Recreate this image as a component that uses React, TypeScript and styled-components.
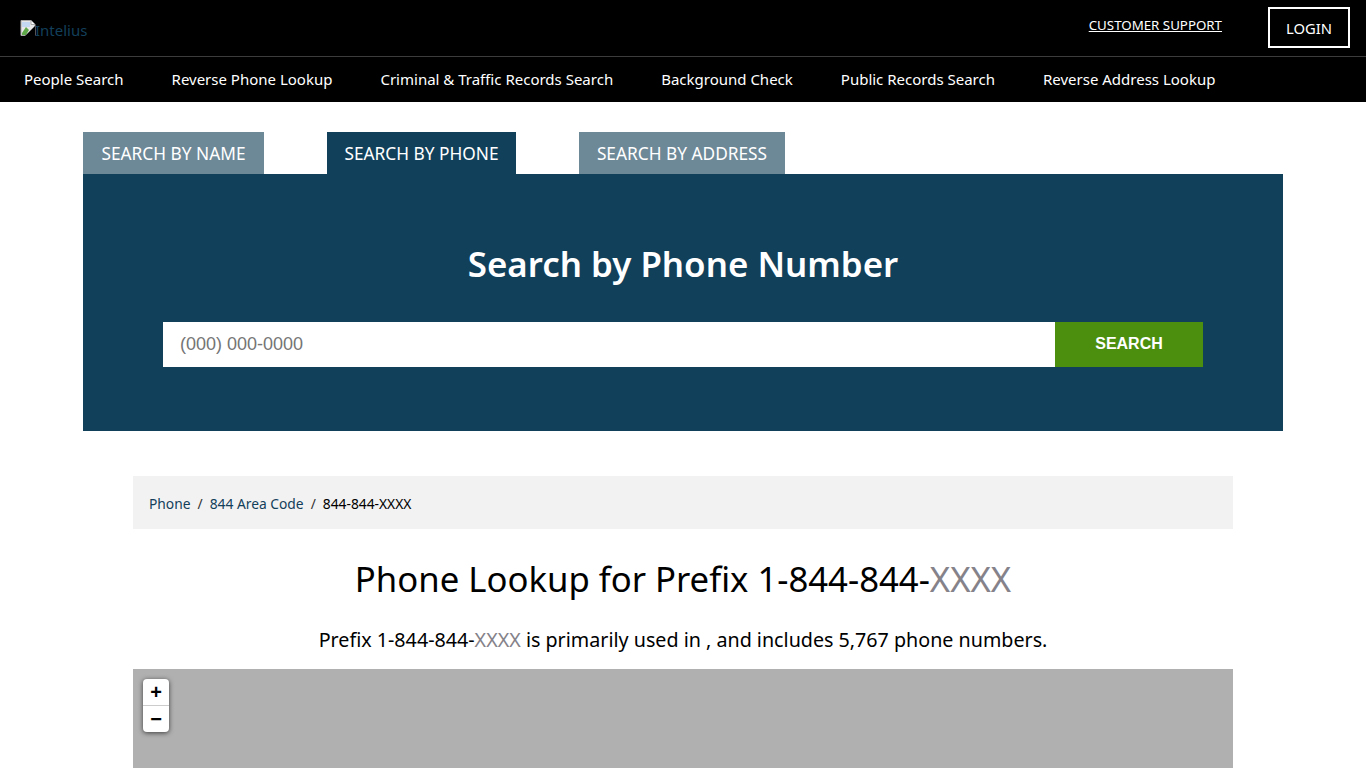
import React from "react";
import styled, { createGlobalStyle } from "styled-components";

const GlobalStyle = createGlobalStyle`
  html, body {
    margin: 0;
    padding: 0;
    background: #fff;
    color: #000;
    font-family: "Noto Sans", "Open Sans", "Liberation Sans", sans-serif;
  }

  * {
    box-sizing: border-box;
  }
`;

const TopBar = styled.div`
  height: 57px;
  background: #000;
  border-bottom: 1px solid #3c3c3c;
  display: flex;
  align-items: flex-start;
  justify-content: space-between;
  padding: 7px 16px 0 20px;
`;

const Logo = styled.a`
  display: flex;
  align-items: flex-start;
  margin-top: 13px;
  color: #123f5a;
  font-size: 15px;
  line-height: 20px;
  text-decoration: none;
  svg {
    flex: none;
    margin-right: -1px;
  }
`;

const TopActions = styled.div`
  display: flex;
  align-items: flex-start;
  gap: 46px;
`;

const SupportLink = styled.a`
  margin-top: 8px;
  color: #fff;
  font-size: 13.3px;
  line-height: 20px;
  text-decoration: underline;
`;

const LoginButton = styled.button`
  width: 82px;
  height: 41px;
  background: #000;
  border: 2px solid #fff;
  color: #fff;
  font-family: inherit;
  font-size: 14.8px;
  padding: 0;
`;

const NavBar = styled.nav`
  height: 45px;
  background: #000;
  display: flex;
  align-items: center;
  gap: 48px;
  padding: 0 24px 1px;
`;

const NavLink = styled.a`
  color: #fff;
  font-size: 15px;
  line-height: 20px;
  text-decoration: none;
  white-space: nowrap;
`;

const SearchSection = styled.section`
  width: 1200px;
  margin: 30px auto 0;
`;

const Tabs = styled.div`
  display: grid;
  grid-template-columns: 181px 189px 206px;
  gap: 63px;
`;

const Tab = styled.a<{ $active?: boolean }>`
  height: 42px;
  display: flex;
  align-items: center;
  justify-content: center;
  background: ${(p) => (p.$active ? "#11405b" : "#6d8897")};
  color: #fff;
  font-size: 17.3px;
  white-space: nowrap;
`;

const SearchPanel = styled.div`
  height: 257px;
  background: #11405b;
  padding: 65px 80px 0;
`;

const PanelTitle = styled.h2`
  margin: 0 0 34px;
  color: #fff;
  font-size: 34.9px;
  line-height: 49px;
  font-weight: 600;
  text-align: center;
`;

const SearchForm = styled.form`
  display: flex;
  height: 45px;
`;

const PhoneInput = styled.input`
  flex: 1;
  min-width: 0;
  border: 0;
  outline: 0;
  padding: 0 17px;
  background: #fff;
  font-family: "Liberation Sans", Arial, sans-serif;
  font-size: 18px;
  &::placeholder {
    color: #757575;
    opacity: 1;
  }
`;

const SearchButton = styled.button`
  width: 148px;
  border: 0;
  padding: 0 0 2px;
  background: #4c8f0e;
  color: #fff;
  font-family: "Liberation Sans", Arial, sans-serif;
  font-size: 16px;
  font-weight: 700;
`;

const Content = styled.main`
  width: 1100px;
  margin: 45px auto 0;
`;

const Breadcrumb = styled.ol`
  list-style: none;
  margin: 0;
  height: 53px;
  padding: 2px 16px 0;
  display: flex;
  align-items: center;
  background: #f2f2f2;
  font-size: 13.8px;
`;

const Crumb = styled.li`
  color: #000;
  & + &::before {
    content: "/";
    padding: 0 7px;
    color: #333;
  }
  a {
    color: #12405b;
    text-decoration: none;
  }
`;

const Heading = styled.h1`
  margin: 25px 0 0;
  font-size: 34.7px;
  line-height: 50px;
  font-weight: 400;
  text-align: center;
`;

const Masked = styled.span`
  color: #85828a;
`;

const Intro = styled.p`
  margin: 21px 0 0;
  font-size: 19.7px;
  line-height: 30px;
  text-align: center;
`;

const MapBox = styled.div`
  position: relative;
  height: 99px;
  margin-top: 14px;
  background: #b0b0b0;
`;

const ZoomControl = styled.div`
  position: absolute;
  top: 10px;
  left: 10px;
  width: 26px;
  border-radius: 4px;
  background: #fff;
  box-shadow: 0 1px 5px rgba(0, 0, 0, 0.65);
`;

const ZoomButton = styled.a`
  display: block;
  height: 26px;
  line-height: 26px;
  text-align: center;
  color: #000;
  font-family: "Liberation Sans", Arial, sans-serif;
  font-size: 20px;
  font-weight: 700;
  & + & {
    border-top: 1px solid #ccc;
    height: 27px;
  }
`;

const navItems = [
  "People Search",
  "Reverse Phone Lookup",
  "Criminal & Traffic Records Search",
  "Background Check",
  "Public Records Search",
  "Reverse Address Lookup",
];

const BrokenImage = () => (
  <svg width="16" height="16" viewBox="0 0 16 16">
    <path d="M1 0.5h10l4 4v11H1z" fill="#e8e8e8" stroke="#a8a8a8" />
    <path d="M11 0.5v4h4" fill="#fff" stroke="#a8a8a8" />
    <path d="M2 2h8v5H2z" fill="#c5d8f2" />
    <path d="M2 13l4-6 3 3-3 5H2z" fill="#5fa84a" />
    <path d="M5 16L15 6v10z" fill="#000" />
  </svg>
);

export default function App() {
  return (
    <>
      <GlobalStyle />
      <TopBar>
        <Logo href="#">
          <BrokenImage />
          Intelius
        </Logo>
        <TopActions>
          <SupportLink href="#">CUSTOMER SUPPORT</SupportLink>
          <LoginButton>LOGIN</LoginButton>
        </TopActions>
      </TopBar>
      <NavBar>
        {navItems.map((item) => (
          <NavLink key={item} href="#">
            {item}
          </NavLink>
        ))}
      </NavBar>

      <SearchSection>
        <Tabs>
          <Tab>SEARCH BY NAME</Tab>
          <Tab $active>SEARCH BY PHONE</Tab>
          <Tab>SEARCH BY ADDRESS</Tab>
        </Tabs>
        <SearchPanel>
          <PanelTitle>Search by Phone Number</PanelTitle>
          <SearchForm onSubmit={(e) => e.preventDefault()}>
            <PhoneInput placeholder="(000) 000-0000" />
            <SearchButton>SEARCH</SearchButton>
          </SearchForm>
        </SearchPanel>
      </SearchSection>

      <Content>
        <Breadcrumb>
          <Crumb>
            <a href="#">Phone</a>
          </Crumb>
          <Crumb>
            <a href="#">844 Area Code</a>
          </Crumb>
          <Crumb>844-844-XXXX</Crumb>
        </Breadcrumb>
        <Heading>
          Phone Lookup for Prefix 1-844-844-<Masked>XXXX</Masked>
        </Heading>
        <Intro>
          Prefix 1-844-844-<Masked>XXXX</Masked> is primarily used in , and
          includes 5,767 phone numbers.
        </Intro>
        <MapBox>
          <ZoomControl>
            <ZoomButton>+</ZoomButton>
            <ZoomButton>−</ZoomButton>
          </ZoomControl>
        </MapBox>
      </Content>
    </>
  );
}
